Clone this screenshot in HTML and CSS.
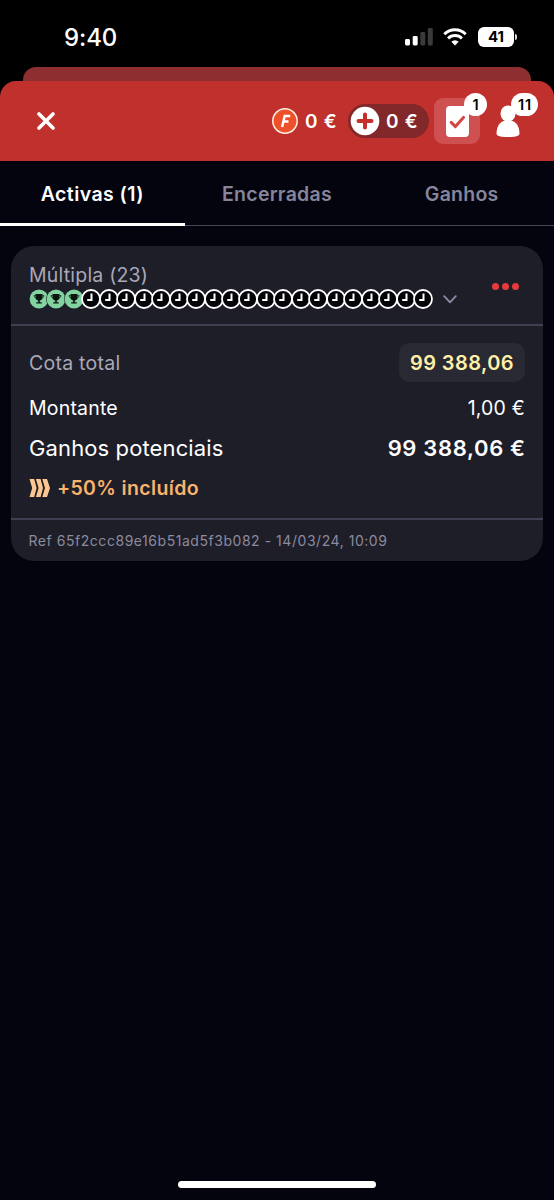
FILE: index.html
```html
<!DOCTYPE html>
<html lang="pt">
<head>
<meta charset="utf-8">
<title>Apostas</title>
<link rel="stylesheet" href="styles.css">
</head>
<body>
<svg class="defs" aria-hidden="true">
  <symbol id="won" viewBox="0 0 20 20">
    <circle cx="10" cy="10" r="9.900" fill="#16161f"/>
    <circle cx="10" cy="10" r="9.400" fill="#83d3a0"/>
    <path d="M6.500 5h7v3.500c0 1.700-1.200 2.700-2.700 3v1.700h2v1.300H7.200v-1.300h2v-1.700c-1.500-.3-2.700-1.300-2.700-3z" fill="#0b1512"/>
    <path d="M6.500 6.500H5q.1 2.200 2 2.500M13.500 6.500H15q-.1 2.200-2 2.500" fill="none" stroke="#0b1512" stroke-width=".7"/>
  </symbol>
  <symbol id="pending" viewBox="0 0 20 20">
    <circle cx="10" cy="10" r="9" fill="#030308" stroke="#fff" stroke-width="1.800"/>
    <path d="M10.500 4.500v6.500H6.200" fill="none" stroke="#fff" stroke-width="2"/>
  </symbol>
</svg>
<div class="status">
  <span class="time">9:40</span>
  <div class="status-icons">
    <svg class="signal" width="28" height="18" viewBox="0 0 28 18">
      <rect x="0" y="11" width="5" height="6.500" rx="1.400" fill="#fff"/>
      <rect x="7.700" y="8" width="5" height="9.500" rx="1.400" fill="#fff"/>
      <rect x="15.300" y="4" width="5" height="13.500" rx="1.400" fill="#3a3a3a"/>
      <rect x="22.800" y="0" width="5" height="17.500" rx="1.400" fill="#3a3a3a"/>
    </svg>
    <svg class="wifi" width="24" height="18" viewBox="0 0 24 18">
      <g fill="none" stroke="#fff" stroke-width="2.900"><path d="M1.300 6.200a15.200 15.200 0 0 1 21.400 0"/><path d="M5.100 10.400a9.700 9.700 0 0 1 13.800 0"/></g>
      <path d="M12 17.500 8.300 13.800a5.200 5.200 0 0 1 7.400 0z" fill="#fff"/>
    </svg>
    <span class="battery">41</span><span class="battery-tip"></span>
  </div>
</div>
<div class="back-sheet"></div>
<header class="header">
  <svg class="close" width="18" height="18" viewBox="0 0 18 18"><path d="M2 2l14 14M16 2L2 16" stroke="#fff" stroke-width="3.600" stroke-linecap="round"/></svg>
  <div class="freebet">
    <svg width="26" height="26" viewBox="0 0 26 26"><circle cx="13" cy="13" r="12.200" fill="#ee5129" stroke="#fff2e6" stroke-width="1.500"/><path d="M10.100 19l2.600-11.100h5.600M11.400 13.400h5.100" fill="none" stroke="#fff" stroke-width="2.500"/></svg>
    <span class="money">0 €</span>
  </div>
  <div class="wallet">
    <svg width="30" height="30" viewBox="0 0 30 30"><circle cx="15" cy="15" r="14.300" fill="#fff"/><path d="M15 8.500v13M8.500 15h13" stroke="#c5302d" stroke-width="4" stroke-linecap="round"/></svg>
    <span class="money">0 €</span>
  </div>
  <div class="bets">
    <svg width="23" height="31" viewBox="0 0 23 31"><rect width="23" height="31" rx="4" fill="#fff"/><path d="M5.200 16.400l4.200 4.200 8.100-9.200" fill="none" stroke="#d34643" stroke-width="3" stroke-linecap="round" stroke-linejoin="round"/></svg>
    <span class="badge">1</span>
  </div>
  <div class="account">
    <svg width="24" height="32" viewBox="0 0 24 32"><ellipse cx="12" cy="8.500" rx="7.500" ry="8" fill="#fff"/><path d="M.5 28.500C.5 20 5.500 15 12 15s11.500 5 11.500 13.500C23.500 31.700 17 32 12 32S.5 31.700.5 28.500z" fill="#fff"/></svg>
    <span class="badge wide">11</span>
  </div>
</header>
<nav class="tabs">
  <div class="tab active"><span>Activas (1)</span></div>
  <div class="tab"><span>Encerradas</span></div>
  <div class="tab"><span>Ganhos</span></div>
</nav>
<main class="card">
  <section class="summary">
    <div class="bet">
      <div class="title">Múltipla (23)</div>
      <div class="legs">
        <svg><use href="#won"/></svg><svg><use href="#won"/></svg><svg><use href="#won"/></svg><svg><use href="#pending"/></svg><svg><use href="#pending"/></svg><svg><use href="#pending"/></svg><svg><use href="#pending"/></svg><svg><use href="#pending"/></svg><svg><use href="#pending"/></svg><svg><use href="#pending"/></svg><svg><use href="#pending"/></svg><svg><use href="#pending"/></svg><svg><use href="#pending"/></svg><svg><use href="#pending"/></svg><svg><use href="#pending"/></svg><svg><use href="#pending"/></svg><svg><use href="#pending"/></svg><svg><use href="#pending"/></svg><svg><use href="#pending"/></svg><svg><use href="#pending"/></svg><svg><use href="#pending"/></svg><svg><use href="#pending"/></svg><svg><use href="#pending"/></svg>
        <svg class="chevron" viewBox="0 0 14 9"><path d="M1.200 1.200L7 7.300l5.800-6.100" fill="none" stroke="#8c8aa6" stroke-width="1.800" stroke-linecap="round" stroke-linejoin="round"/></svg>
      </div>
    </div>
    <div class="more"><i></i><i></i><i></i></div>
  </section>
  <section class="details">
    <div class="row odds"><span class="odds-label">Cota total</span><span class="odds-value">99 388,06</span></div>
    <div class="row stake"><span class="stake-label">Montante</span><span class="stake-value">1,00 €</span></div>
    <div class="row win"><span class="win-label">Ganhos potenciais</span><span class="win-value">99 388,06 €</span></div>
    <div class="row bonus">
      <svg width="22" height="20" viewBox="0 0 22 20"><g fill="#fbc691"><path d="M.5 1h4.700l2.400 9-2.400 9H.5l2.700-9z"/><path d="M6.900 1h4.700l2.400 9-2.400 9H6.900l2.700-9z"/><path d="M13.300 1H18l3 9-3 9h-4.700l2.700-9z"/></g></svg>
      <span class="bonus-text">+50% incluído</span>
    </div>
  </section>
  <footer class="ref"><span>Ref 65f2ccc89e16b51ad5f3b082 - 14/03/24, 10:09</span></footer>
</main>
<div class="home"></div>
</body>
</html>
```
FILE: styles.css
```css
* { box-sizing: border-box; }
body { margin: 0; height: 1200px; display: flex; flex-direction: column; background: #04040f; color: #fff; font-family: Inter, "Liberation Sans", sans-serif; overflow: hidden; white-space: nowrap; }
svg { display: block; flex: none; }
.defs { position: absolute; width: 0; height: 0; }
.status { height: 97px; margin-bottom: -30px; flex: none; background: #000; display: flex; justify-content: space-between; padding: 23px 38px 0 64px; }
.time { font-size: 24px; line-height: 29px; font-weight: 500; letter-spacing: -0.1px; }
.status-icons { display: flex; height: 28px; align-items: center; }
.wifi { margin-left: 10px; }
.battery { margin-left: 11px; width: 36px; height: 20px; border-radius: 6px; background: #fff; color: #000; font-size: 15px; line-height: 20px; font-weight: 700; text-align: center; }
.battery-tip { width: 2px; height: 6px; margin: 0 -1px 0 1px; border-radius: 0 3px 3px 0; background: #ddd; }
.back-sheet { flex: none; height: 30px; margin: 0 23px -16px; background: #8d2f30; border-radius: 13px 13px 0 0; }
.header { flex: none; height: 80px; background: #c0302c; border-radius: 16px 16px 0 0; display: flex; align-items: center; padding-left: 36.500px; position: relative; }
.freebet { margin-left: 217.500px; display: flex; align-items: center; gap: 7px; width: 76px; }
.money { font-size: 19px; font-weight: 600; line-height: 24px; letter-spacing: .7px; padding-top: 1px; }
.wallet { display: flex; align-items: center; gap: 6px; width: 81px; height: 34px; padding-left: 2px; border-radius: 17px; background: #83282a; }
.bets { position: relative; width: 46px; height: 46px; margin-left: 5px; border-radius: 9px; background: #cf5050; display: grid; place-items: center; }
.account { position: relative; margin-left: 16px; }
.badge { position: absolute; left: 30px; top: -5px; width: 23px; height: 23px; border-radius: 12px; background: #fff; color: #000; font-size: 14.500px; font-weight: 600; line-height: 23px; text-align: center; }
.badge.wide { left: 15px; top: -12px; width: 27px; letter-spacing: .8px; padding-left: 1px; }
.tabs { flex: none; height: 65px; display: flex; border-bottom: 1px solid #474658; }
.tab { flex: 1; height: 65px; display: grid; place-items: center; font-size: 19.500px; font-weight: 600; color: #86859b; letter-spacing: .25px; }
.tab.active { color: #fff; border-bottom: 3px solid #fff; padding-top: 3px; letter-spacing: .45px; }
.card { flex: none; height: 315px; margin: 20px 11px 0; border-radius: 23px; background: #1e1e29; display: flex; flex-direction: column; }
.summary { height: 80px; border-bottom: 2px solid #403f51; display: flex; justify-content: space-between; padding: 17px 24px 0 18px; }
.title { font-size: 19.500px; line-height: 24px; color: #a9a8b8; letter-spacing: .2px; }
.legs { display: flex; align-items: center; height: 20px; margin-top: 2px; }
.legs svg { width: 20px; height: 20px; margin-right: -2.550px; }
.legs .chevron { width: 14px; height: 9px; margin: 0 0 0 13px; }
.more { display: flex; gap: 3px; padding-top: 20px; }
.more i { width: 7px; height: 7px; border-radius: 50%; background: #e63a3c; }
.details { height: 194px; padding: 17px 18px 0; border-bottom: 2px solid #403f51; }
.row { display: flex; justify-content: space-between; align-items: center; }
.odds { height: 39px; }
.odds-label { font-size: 19.500px; color: #a9a8b8; letter-spacing: .25px; }
.odds-value { width: 126px; height: 39px; line-height: 40px; border-radius: 10px; background: #292933; text-align: center; color: #fff0a8; font-size: 20px; font-weight: 600; letter-spacing: .4px; }
.stake { height: 52px; font-size: 19.500px; letter-spacing: .2px; }
.win { height: 28px; font-size: 22px; letter-spacing: .12px; }
.win-value { font-weight: 600; letter-spacing: .65px; margin-right: -.65px; }
.bonus { height: 52px; justify-content: flex-start; gap: 6px; color: #f9b36c; font-size: 19.500px; font-weight: 600; letter-spacing: .35px; }
.ref { height: 41px; padding-left: 17.500px; display: flex; align-items: center; color: #8c8a9e; font-size: 14px; letter-spacing: .54px; }
.home { flex: none; width: 198px; height: 7px; border-radius: 4px; background: #fff; margin: auto auto 12px; }
```
